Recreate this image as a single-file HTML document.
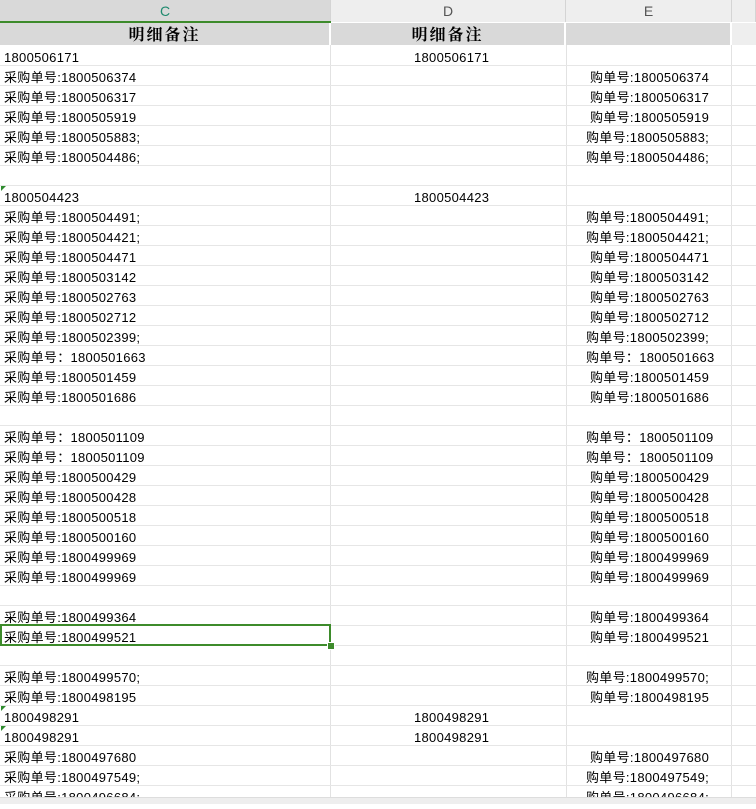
<!DOCTYPE html>
<html><head><meta charset="utf-8"><style>
body{margin:0;width:756px;height:803px;overflow:hidden;background:#fff;position:relative;font-family:"Liberation Sans","Noto Sans CJK SC",sans-serif;font-size:13px;color:#000}
.ch{position:absolute;top:0;height:22px;background:#eeeeee;border-right:1px solid #d4d4d4;box-sizing:border-box;text-align:center;line-height:22px;font-size:14px;color:#555}
.h1{position:absolute;top:23px;height:22px;background:#d9d9d9;border-right:2px solid #fff;box-sizing:border-box;text-align:center;line-height:26px;font-size:16px;font-weight:bold;letter-spacing:2px;font-family:"Liberation Sans","Noto Serif CJK SC",serif}
.vl{position:absolute;top:45px;bottom:0;width:1px;background:#e2e2e2}
.hl{position:absolute;left:0;width:756px;height:1px;background:#e6e6e6}
.r{position:absolute;left:0;width:756px;height:20px;line-height:23px;white-space:nowrap;letter-spacing:0.3px}
.r span{position:absolute}
.c{left:4px}.d{left:414px}.e{left:590px}.e2{left:586px}
.t{position:absolute;left:1px;width:0;height:0;border-top:5px solid #2e8b2e;border-right:5px solid transparent}
</style></head><body>
<div class="ch" style="left:0;width:331px;background:#d9d9d9;color:#1f8a6e">C</div>
<div style="position:absolute;left:0;top:21px;width:331px;height:2px;background:#3d8b2b"></div>
<div class="ch" style="left:331px;width:235px">D</div>
<div class="ch" style="left:566px;width:166px">E</div>
<div class="ch" style="left:732px;width:24px"></div>
<div class="h1" style="left:0;width:331px">明细备注</div>
<div class="h1" style="left:331px;width:235px">明细备注</div>
<div class="h1" style="left:566px;width:166px"></div>
<div class="h1" style="left:732px;width:24px;border:none;background:#eee"></div>
<div class="vl" style="left:330px"></div><div class="vl" style="left:566px"></div><div class="vl" style="left:731px"></div>
<div class="hl" style="top:65px"></div><div class="hl" style="top:85px"></div><div class="hl" style="top:105px"></div><div class="hl" style="top:125px"></div><div class="hl" style="top:145px"></div><div class="hl" style="top:165px"></div><div class="hl" style="top:185px"></div><div class="hl" style="top:205px"></div><div class="hl" style="top:225px"></div><div class="hl" style="top:245px"></div><div class="hl" style="top:265px"></div><div class="hl" style="top:285px"></div><div class="hl" style="top:305px"></div><div class="hl" style="top:325px"></div><div class="hl" style="top:345px"></div><div class="hl" style="top:365px"></div><div class="hl" style="top:385px"></div><div class="hl" style="top:405px"></div><div class="hl" style="top:425px"></div><div class="hl" style="top:445px"></div><div class="hl" style="top:465px"></div><div class="hl" style="top:485px"></div><div class="hl" style="top:505px"></div><div class="hl" style="top:525px"></div><div class="hl" style="top:545px"></div><div class="hl" style="top:565px"></div><div class="hl" style="top:585px"></div><div class="hl" style="top:605px"></div><div class="hl" style="top:625px"></div><div class="hl" style="top:645px"></div><div class="hl" style="top:665px"></div><div class="hl" style="top:685px"></div><div class="hl" style="top:705px"></div><div class="hl" style="top:725px"></div><div class="hl" style="top:745px"></div><div class="hl" style="top:765px"></div><div class="hl" style="top:785px"></div>

<div class="r" style="top:46px"><span class="c">1800506171</span><span class="d">1800506171</span></div>
<div class="r" style="top:66px"><span class="c">采购单号:1800506374</span><span class="e">购单号:1800506374</span></div>
<div class="r" style="top:86px"><span class="c">采购单号:1800506317</span><span class="e">购单号:1800506317</span></div>
<div class="r" style="top:106px"><span class="c">采购单号:1800505919</span><span class="e">购单号:1800505919</span></div>
<div class="r" style="top:126px"><span class="c">采购单号:1800505883;</span><span class="e2">购单号:1800505883;</span></div>
<div class="r" style="top:146px"><span class="c">采购单号:1800504486;</span><span class="e2">购单号:1800504486;</span></div>
<div class="t" style="top:186px"></div>
<div class="r" style="top:186px"><span class="c">1800504423</span><span class="d">1800504423</span></div>
<div class="r" style="top:206px"><span class="c">采购单号:1800504491;</span><span class="e2">购单号:1800504491;</span></div>
<div class="r" style="top:226px"><span class="c">采购单号:1800504421;</span><span class="e2">购单号:1800504421;</span></div>
<div class="r" style="top:246px"><span class="c">采购单号:1800504471</span><span class="e">购单号:1800504471</span></div>
<div class="r" style="top:266px"><span class="c">采购单号:1800503142</span><span class="e">购单号:1800503142</span></div>
<div class="r" style="top:286px"><span class="c">采购单号:1800502763</span><span class="e">购单号:1800502763</span></div>
<div class="r" style="top:306px"><span class="c">采购单号:1800502712</span><span class="e">购单号:1800502712</span></div>
<div class="r" style="top:326px"><span class="c">采购单号:1800502399;</span><span class="e2">购单号:1800502399;</span></div>
<div class="r" style="top:346px"><span class="c">采购单号：1800501663</span><span class="e2">购单号：1800501663</span></div>
<div class="r" style="top:366px"><span class="c">采购单号:1800501459</span><span class="e">购单号:1800501459</span></div>
<div class="r" style="top:386px"><span class="c">采购单号:1800501686</span><span class="e">购单号:1800501686</span></div>
<div class="r" style="top:426px"><span class="c">采购单号：1800501109</span><span class="e2">购单号：1800501109</span></div>
<div class="r" style="top:446px"><span class="c">采购单号：1800501109</span><span class="e2">购单号：1800501109</span></div>
<div class="r" style="top:466px"><span class="c">采购单号:1800500429</span><span class="e">购单号:1800500429</span></div>
<div class="r" style="top:486px"><span class="c">采购单号:1800500428</span><span class="e">购单号:1800500428</span></div>
<div class="r" style="top:506px"><span class="c">采购单号:1800500518</span><span class="e">购单号:1800500518</span></div>
<div class="r" style="top:526px"><span class="c">采购单号:1800500160</span><span class="e">购单号:1800500160</span></div>
<div class="r" style="top:546px"><span class="c">采购单号:1800499969</span><span class="e">购单号:1800499969</span></div>
<div class="r" style="top:566px"><span class="c">采购单号:1800499969</span><span class="e">购单号:1800499969</span></div>
<div class="r" style="top:606px"><span class="c">采购单号:1800499364</span><span class="e">购单号:1800499364</span></div>
<div class="r" style="top:626px"><span class="c">采购单号:1800499521</span><span class="e">购单号:1800499521</span></div>
<div class="r" style="top:666px"><span class="c">采购单号:1800499570;</span><span class="e2">购单号:1800499570;</span></div>
<div class="r" style="top:686px"><span class="c">采购单号:1800498195</span><span class="e">购单号:1800498195</span></div>
<div class="t" style="top:706px"></div>
<div class="r" style="top:706px"><span class="c">1800498291</span><span class="d">1800498291</span></div>
<div class="t" style="top:726px"></div>
<div class="r" style="top:726px"><span class="c">1800498291</span><span class="d">1800498291</span></div>
<div class="r" style="top:746px"><span class="c">采购单号:1800497680</span><span class="e">购单号:1800497680</span></div>
<div class="r" style="top:766px"><span class="c">采购单号:1800497549;</span><span class="e2">购单号:1800497549;</span></div>
<div class="r" style="top:786px"><span class="c">采购单号:1800496684;</span><span class="e2">购单号:1800496684;</span></div>

<div style="position:absolute;left:0;top:624px;width:331px;height:22px;border:2px solid #3d8b2b;box-sizing:border-box"></div>
<div style="position:absolute;left:327px;top:642px;width:6px;height:6px;background:#3d8b2b;border:1px solid #fff"></div>
<div style="position:absolute;left:0;top:797px;width:756px;height:6px;background:#eeeeee;border-top:1px solid #ddd"></div>
</body></html>
